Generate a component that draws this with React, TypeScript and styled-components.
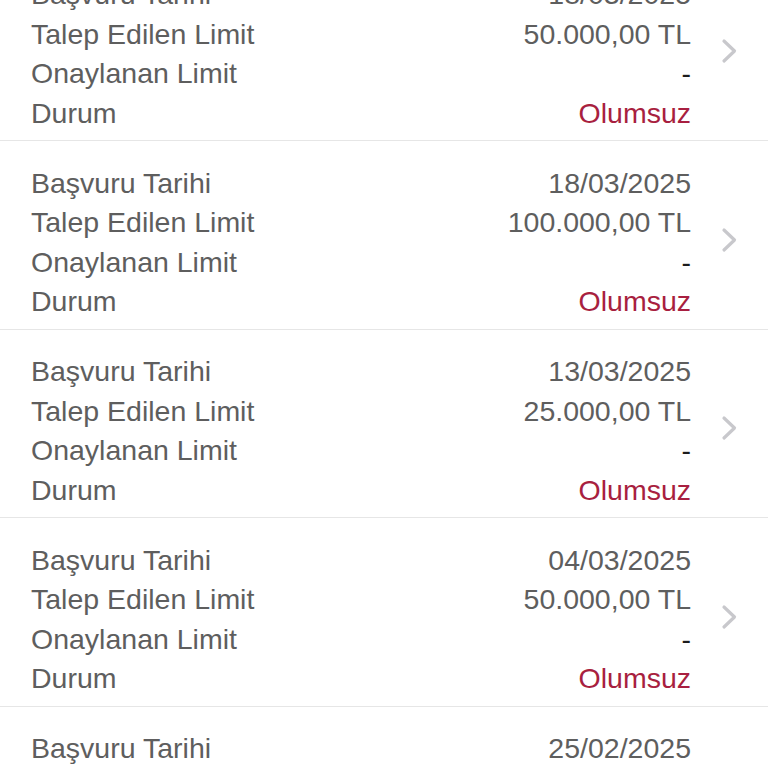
import React from "react";
import styled, { createGlobalStyle } from "styled-components";

const GlobalStyle = createGlobalStyle`
  html, body {
    margin: 0;
    padding: 0;
    background: #ffffff;
    overflow: hidden;
  }
  body {
    font-family: "Liberation Sans", Arial, sans-serif;
  }
`;

const List = styled.div`
  margin-top: -47.5px;
  display: flex;
  flex-direction: column;
`;

const Card = styled.div`
  display: flex;
  align-items: center;
  padding: 22.5px 30px 7px 31px;
  border-bottom: 1px solid #e6e6e6;
`;

const Grid = styled.div`
  flex: 1;
  display: grid;
  grid-template-columns: 1fr auto;
  font-size: 28.5px;
  line-height: 39.5px;
  color: #5e5e5e;
`;

const Label = styled.div`
  white-space: nowrap;
`;

const Value = styled.div<{ $tone?: "red" | "dark" }>`
  text-align: right;
  white-space: nowrap;
  color: ${(p) =>
    p.$tone === "red" ? "#a81f40" : p.$tone === "dark" ? "#1c1c1c" : "#5e5e5e"};
`;

const ChevronBox = styled.div`
  width: 17px;
  margin-left: 30px;
  margin-top: -6px;
  display: flex;
  align-items: center;
  justify-content: center;
`;

const Chevron = () => (
  <svg width="17" height="26" viewBox="0 0 17 26" fill="none">
    <path
      d="M3 3 L13.5 13 L3 23"
      stroke="#c8c8cc"
      strokeWidth="3.2"
      strokeLinecap="round"
      strokeLinejoin="round"
    />
  </svg>
);

type Item = { date: string; requested: string; approved: string; status: string };

const items: Item[] = [
  { date: "18/03/2025", requested: "50.000,00 TL", approved: "-", status: "Olumsuz" },
  { date: "18/03/2025", requested: "100.000,00 TL", approved: "-", status: "Olumsuz" },
  { date: "13/03/2025", requested: "25.000,00 TL", approved: "-", status: "Olumsuz" },
  { date: "04/03/2025", requested: "50.000,00 TL", approved: "-", status: "Olumsuz" },
  { date: "25/02/2025", requested: "50.000,00 TL", approved: "-", status: "Olumsuz" },
];

export default function App() {
  return (
    <>
      <GlobalStyle />
      <List>
        {items.map((it, i) => (
          <Card key={i}>
            <Grid>
              <Label>Başvuru Tarihi</Label>
              <Value>{it.date}</Value>
              <Label>Talep Edilen Limit</Label>
              <Value>{it.requested}</Value>
              <Label>Onaylanan Limit</Label>
              <Value $tone="dark">{it.approved}</Value>
              <Label>Durum</Label>
              <Value $tone="red">{it.status}</Value>
            </Grid>
            <ChevronBox>
              <Chevron />
            </ChevronBox>
          </Card>
        ))}
      </List>
    </>
  );
}
